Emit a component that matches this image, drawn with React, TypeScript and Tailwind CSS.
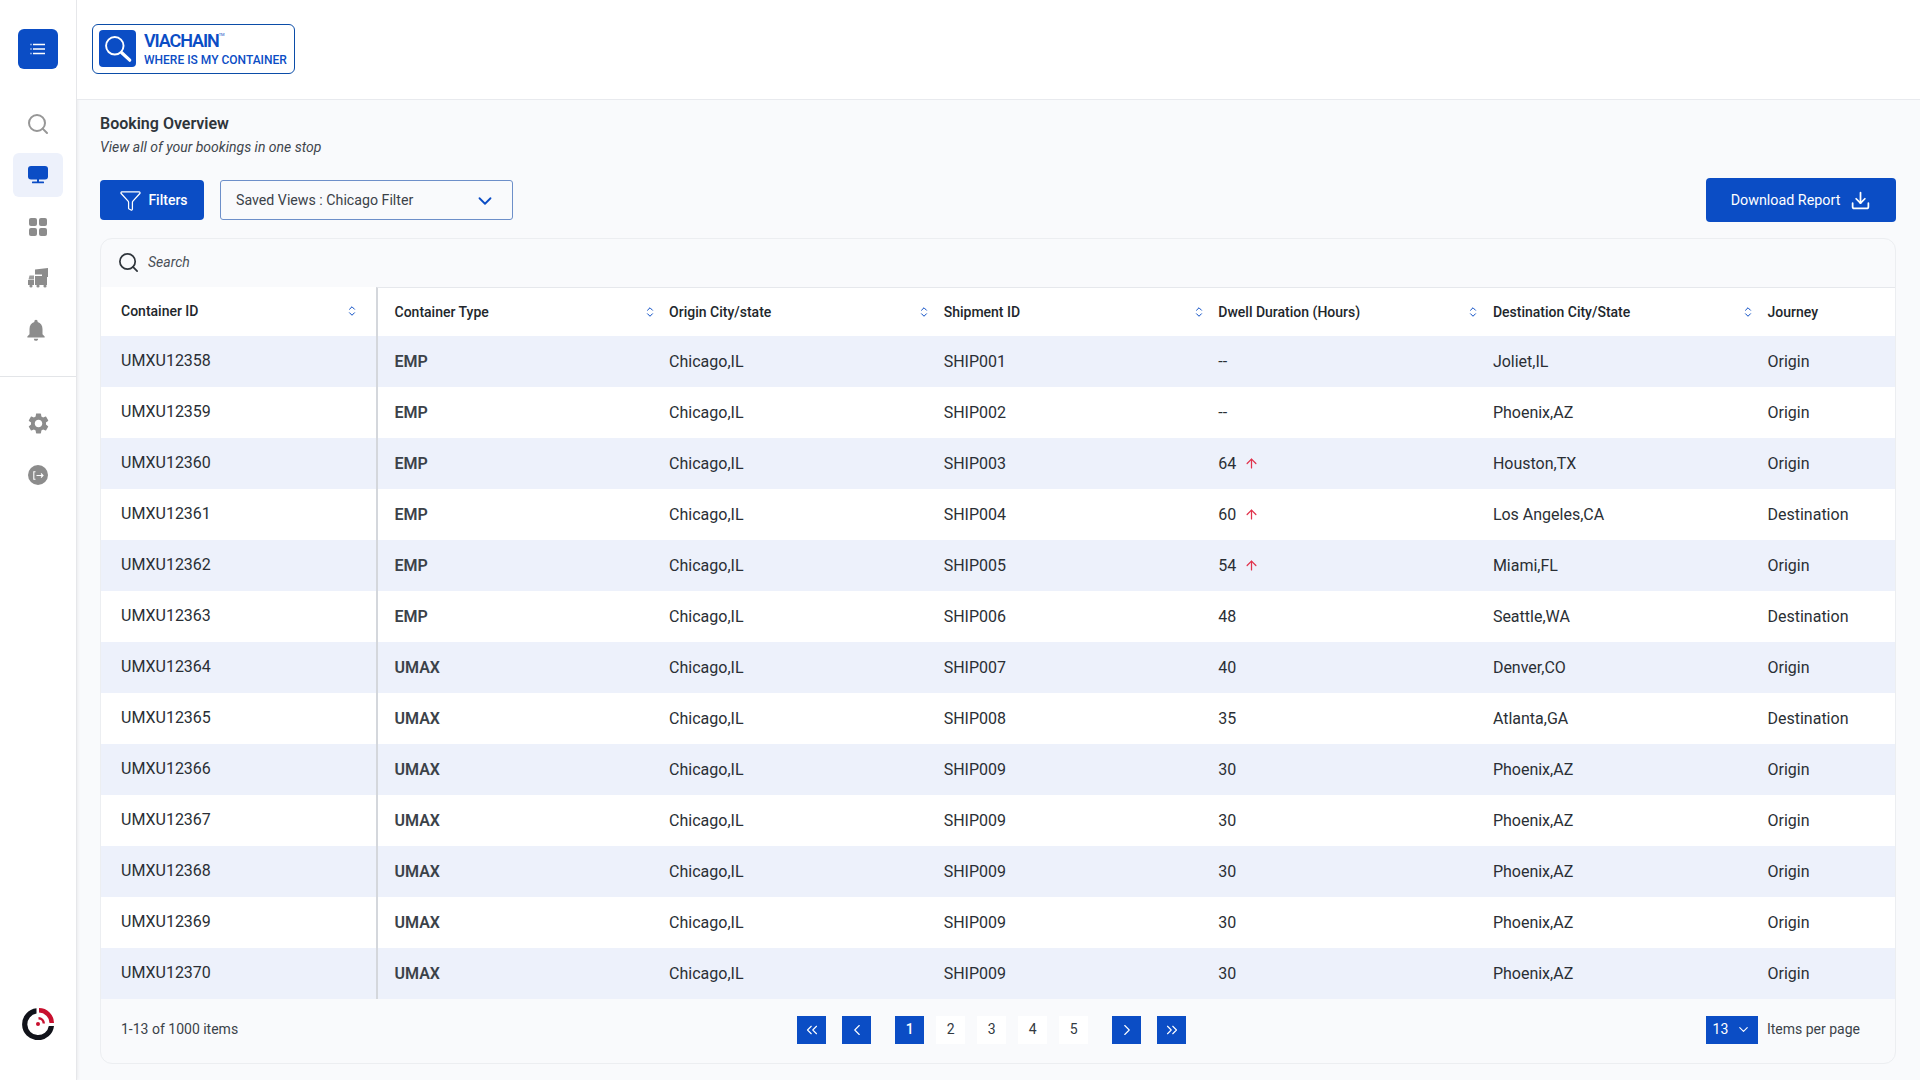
import React from "react";
import { Search, Funnel, ChevronDown, Download, ChevronsLeft, ChevronsRight, ChevronLeft, ChevronRight, ArrowUp, ChevronUp } from "lucide-react";
import { MdSettings, MdNotifications } from "react-icons/md";

const rows = [
  ["UMXU12358", "EMP", "SHIP001", "--", false, "Joliet,IL", "Origin"],
  ["UMXU12359", "EMP", "SHIP002", "--", false, "Phoenix,AZ", "Origin"],
  ["UMXU12360", "EMP", "SHIP003", "64", true, "Houston,TX", "Origin"],
  ["UMXU12361", "EMP", "SHIP004", "60", true, "Los Angeles,CA", "Destination"],
  ["UMXU12362", "EMP", "SHIP005", "54", true, "Miami,FL", "Origin"],
  ["UMXU12363", "EMP", "SHIP006", "48", false, "Seattle,WA", "Destination"],
  ["UMXU12364", "UMAX", "SHIP007", "40", false, "Denver,CO", "Origin"],
  ["UMXU12365", "UMAX", "SHIP008", "35", false, "Atlanta,GA", "Destination"],
  ["UMXU12366", "UMAX", "SHIP009", "30", false, "Phoenix,AZ", "Origin"],
  ["UMXU12367", "UMAX", "SHIP009", "30", false, "Phoenix,AZ", "Origin"],
  ["UMXU12368", "UMAX", "SHIP009", "30", false, "Phoenix,AZ", "Origin"],
  ["UMXU12369", "UMAX", "SHIP009", "30", false, "Phoenix,AZ", "Origin"],
  ["UMXU12370", "UMAX", "SHIP009", "30", false, "Phoenix,AZ", "Origin"],
] as const;

function Sort() {
  return (
    <span className="flex h-4 w-3 flex-col items-center justify-center text-[#0b4dc5]">
      <ChevronUp size={12} strokeWidth={2.4} className="-mb-[2px]" />
      <ChevronDown size={12} strokeWidth={2.4} className="-mt-[2px]" />
    </span>
  );
}

function HeadCell({ label, last }: { label: string; last?: boolean }) {
  return (
    <div className="flex h-full w-[274.6px] items-center justify-between pl-[16.5px] pr-[-3px]">
      <span>{label}</span>
      {!last && <span className="-mr-[3px]"><Sort /></span>}
    </div>
  );
}

function PageBtn({ children, on }: { children: React.ReactNode; on?: boolean }) {
  return (
    <div className={on ? "flex h-7 w-[29px] items-center justify-center bg-[#0b4dc5] text-white" : "flex h-7 w-[29px] items-center justify-center bg-white text-[#333a42]"}>
      {children}
    </div>
  );
}

function Trucks() {
  return (
    <svg width="22" height="20" viewBox="0 0 22 20" fill="#8c8c8c">
      <path d="M8 1.5 21 0v9h-6V6.5H8z" />
      <path d="M2.5 7.5H7v4H1.5z" opacity="0.85" />
      <path d="M8 8h12v9H8z" />
      <path d="M1 12h6v5H1z" />
      <circle cx="4" cy="18" r="1.6" />
      <circle cx="11" cy="18" r="1.6" />
      <circle cx="18" cy="18" r="1.6" />
    </svg>
  );
}

export default function App() {
  return (
    <div className="flex h-screen w-full overflow-hidden bg-[#f9fafc] text-[#2f353b] [font-family:Roboto,sans-serif]">
      <aside className="flex h-full w-[77px] shrink-0 flex-col border-r border-[#e6e7ea] bg-white shadow-[1px_0_3px_rgba(0,0,0,0.06)]">
        <div className="flex justify-center pt-[29px]">
          <div className="flex h-10 w-10 items-center justify-center rounded-md bg-[#0b4dc5]">
            <svg width="16" height="12" viewBox="0 0 16 12" fill="none" stroke="white" strokeWidth="1.6">
              <path d="M3 1.5h12M3 6h12M3 10.5h12" />
              <path d="M.5 1.5h1M.5 6h1M.5 10.5h1" />
            </svg>
          </div>
        </div>
        <div className="mt-[41px] flex h-7 items-center justify-center">
          <Search size={24} strokeWidth={2} className="text-[#979797]" />
        </div>
        <div className="mx-[13px] mt-[15px] flex h-11 w-[50px] items-center justify-center rounded-md bg-[#edf1fb]">
          <svg width="20" height="18" viewBox="0 0 20 18" fill="#0b4dc5">
            <rect x="0" y="0" width="20" height="13.5" rx="3" />
            <rect x="9" y="13" width="2" height="3" />
            <rect x="4" y="15.5" width="12" height="1.8" rx="0.5" />
          </svg>
        </div>
        <div className="mt-[18px] flex h-[24px] items-center justify-center">
          <svg width="18" height="18" viewBox="0 0 18 18" fill="#8c8c8c">
            <rect width="8" height="8" rx="2" />
            <rect x="10" width="8" height="8" rx="2" />
            <rect y="10" width="8" height="8" rx="2" />
            <rect x="10" y="10" width="8" height="8" rx="2" />
          </svg>
        </div>
        <div className="mt-[27px] flex h-[24px] items-center justify-center">
          <Trucks />
        </div>
        <div className="mt-[28px] flex h-[24px] items-center justify-center pr-[4px]">
          <MdNotifications size={26} className="text-[#8c8c8c]" />
        </div>
        <div className="mt-[34px] h-px w-full bg-[#e3e5e8]" />
        <div className="mt-[34px] flex h-6 items-center justify-center">
          <MdSettings size={25} className="text-[#8c8c8c]" />
        </div>
        <div className="mt-[28px] flex h-6 items-center justify-center">
          <div className="flex h-5 w-5 items-center justify-center rounded-full bg-[#8c8c8c]">
            <svg width="11" height="9" viewBox="0 0 11 9" fill="none" stroke="white" strokeWidth="1.1">
              <path d="M2.5.8H.8v7.4h1.7M3.5 4.5h6.5M8 2.5l2 2-2 2" />
            </svg>
          </div>
        </div>
        <div className="mt-auto flex justify-center pb-[40px]">
          <svg width="32" height="32" viewBox="0 0 32 32" fill="none">
            <path d="M14.5 0.3A16 16 0 1 0 32 18H26.8A10.8 10.8 0 1 1 14.5 5.6Z" fill="#11131a" />
            <path d="M17 0A15 15 0 0 1 32 15H27.5A10.5 10.5 0 0 0 17 4.6Z" fill="#c8102e" />
            <path d="M16.5 9A6.5 6.5 0 0 1 23 15.5H20.6A4.2 4.2 0 0 0 16.5 11.5Z" fill="#c8102e" />
            <circle cx="16" cy="16" r="2" fill="#c8102e" />
          </svg>
        </div>
      </aside>

      <div className="flex min-w-0 flex-1 flex-col">
        <header className="flex h-[100px] shrink-0 items-center border-b border-[#e8eaee] bg-white pb-[2px] pl-[15px]">
          <div className="flex h-[50px] w-[203px] items-center rounded-[6px] border border-[#0b4da8] bg-white pl-[6px]">
            <div className="flex h-[37px] w-[37px] items-center justify-center rounded-[4px] bg-[#0b4dc5]">
              <svg width="32" height="32" viewBox="0 0 30 30" fill="none" stroke="white">
                <circle cx="12" cy="12" r="8.2" strokeWidth="1.8" />
                <path d="M18.5 18.5 26 25.5" strokeWidth="3" strokeLinecap="round" />
              </svg>
            </div>
            <div className="ml-2 flex flex-col text-[#0b4dc5]">
              <div className="flex items-start">
                <span className="text-[18px] leading-[19px] font-semibold tracking-[-1.1px]">VIACHAIN</span>
                <span className="mt-[1px] text-[4px] leading-[5px]">TM</span>
              </div>
              <span className="mt-[3px] text-[12px] leading-[14px] font-medium">WHERE IS MY CONTAINER</span>
            </div>
          </div>
        </header>

        <main className="flex min-h-0 flex-1 flex-col pl-[23px] pr-[24px]">
          <h1 className="mt-[14px] text-[16px] leading-[20px] font-semibold text-[#2f353b]">Booking Overview</h1>
          <p className="mt-[3px] text-[14px] leading-[20px] italic text-[#3f464d]">View all of your bookings in one stop</p>

          <div className="mt-[21px] flex h-[44px] items-center">
            <button className="flex h-10 w-[104px] items-center justify-center gap-[6px] rounded-[4px] bg-[#0b4dc5] pl-[3px] pt-[1px] text-[14px] font-medium text-white">
              <Funnel size={23} strokeWidth={1.3} />
              Filters
            </button>
            <div className="ml-4 flex h-10 w-[293px] items-center justify-between rounded-[3px] border border-[#6d8fc9] pl-[15px] pr-[16px] pt-[1px] text-[14.2px] text-[#3b4249]">
              <span>Saved Views : Chicago Filter</span>
              <ChevronDown size={22} strokeWidth={2} className="text-[#0b4dc5]" />
            </div>
            <button className="ml-auto flex h-[44px] w-[190px] items-center justify-center gap-[10px] rounded-[4px] bg-[#0b4dc5] pt-[1px] text-[14.3px] text-white">
              Download Report
              <Download size={21} strokeWidth={2} />
            </button>
          </div>

          <section className="mt-[16px] flex h-[826px] flex-col overflow-hidden rounded-[12px] border border-[#eceef1] bg-[#f9fafc]">
            <div className="flex h-[48px] shrink-0 items-center pb-[2px] pl-[16px]">
              <Search size={23} strokeWidth={1.8} className="text-[#2f353b]" />
              <span className="ml-[8px] text-[14px] italic text-[#4a5057]">Search</span>
            </div>
            <div className="flex h-[49px] shrink-0 items-center text-[14px] font-medium text-[#22272c]">
              <div className="flex h-full w-[275px] shrink-0 items-center justify-between bg-white pb-[1px] pl-5 pr-[18px]">
                <span>Container ID</span>
                <Sort />
              </div>
              <div className="flex h-full flex-1 items-center border-t border-l-2 border-[#e6e8ec] border-l-[#d4d7dc] bg-white">
                <HeadCell label="Container Type" />
                <HeadCell label="Origin City/state" />
                <HeadCell label="Shipment ID" />
                <HeadCell label="Dwell Duration (Hours)" />
                <HeadCell label="Destination City/State" />
                <HeadCell label="Journey" last />
              </div>
            </div>
            {rows.map((r, i) => (
              <div key={r[0]} className={i % 2 === 0 ? "flex h-[51px] shrink-0 bg-[#edf1fb] text-[16px] text-[#2a2f35]" : "flex h-[51px] shrink-0 bg-white text-[16px] text-[#2a2f35]"}>
                <div className="flex w-[275px] shrink-0 items-center pb-[2px] pl-5">{r[0]}</div>
                <div className="flex flex-1 items-center border-l-2 border-[#d4d7dc]">
                  <div className="w-[274.6px] pl-[16.5px] font-semibold text-[#3b4249]">{r[1]}</div>
                  <div className="w-[274.6px] pl-[16.5px]">Chicago,IL</div>
                  <div className="w-[274.6px] pl-[16.5px]">{r[2]}</div>
                  <div className="flex w-[274.6px] items-center pl-[16.5px]">
                    {r[3]}
                    {r[4] && <ArrowUp size={15} strokeWidth={2} className="ml-[8px] text-[#e0334c]" />}
                  </div>
                  <div className="w-[274.6px] pl-[16.5px]">{r[5]}</div>
                  <div className="w-[274.6px] pl-[16.5px]">{r[6]}</div>
                </div>
              </div>
            ))}
            <div className="relative flex flex-1 items-center pb-[3px] pl-5 text-[14px] text-[#3b4249]">
              <span>1-13 of 1000 items</span>
              <div className="ml-[559px] flex items-center">
                <PageBtn on><ChevronsLeft size={18} strokeWidth={1.5} /></PageBtn>
                <div className="ml-4"><PageBtn on><ChevronLeft size={18} strokeWidth={1.5} /></PageBtn></div>
                <div className="ml-6"><PageBtn on><span className="font-medium">1</span></PageBtn></div>
                <div className="ml-3 flex gap-3">
                  <PageBtn>2</PageBtn>
                  <PageBtn>3</PageBtn>
                  <PageBtn>4</PageBtn>
                  <PageBtn>5</PageBtn>
                </div>
                <div className="ml-6"><PageBtn on><ChevronRight size={18} strokeWidth={1.5} /></PageBtn></div>
                <div className="ml-4"><PageBtn on><ChevronsRight size={18} strokeWidth={1.5} /></PageBtn></div>
              </div>
              <div className="ml-auto flex items-center pr-[35px]">
                <div className="flex h-7 w-[52px] items-center justify-center gap-[8px] bg-[#0b4dc5] text-white">
                  <span>13</span>
                  <ChevronDown size={15} strokeWidth={1.8} />
                </div>
                <span className="ml-[9px]">Items per page</span>
              </div>
            </div>
          </section>
        </main>
      </div>
    </div>
  );
}
